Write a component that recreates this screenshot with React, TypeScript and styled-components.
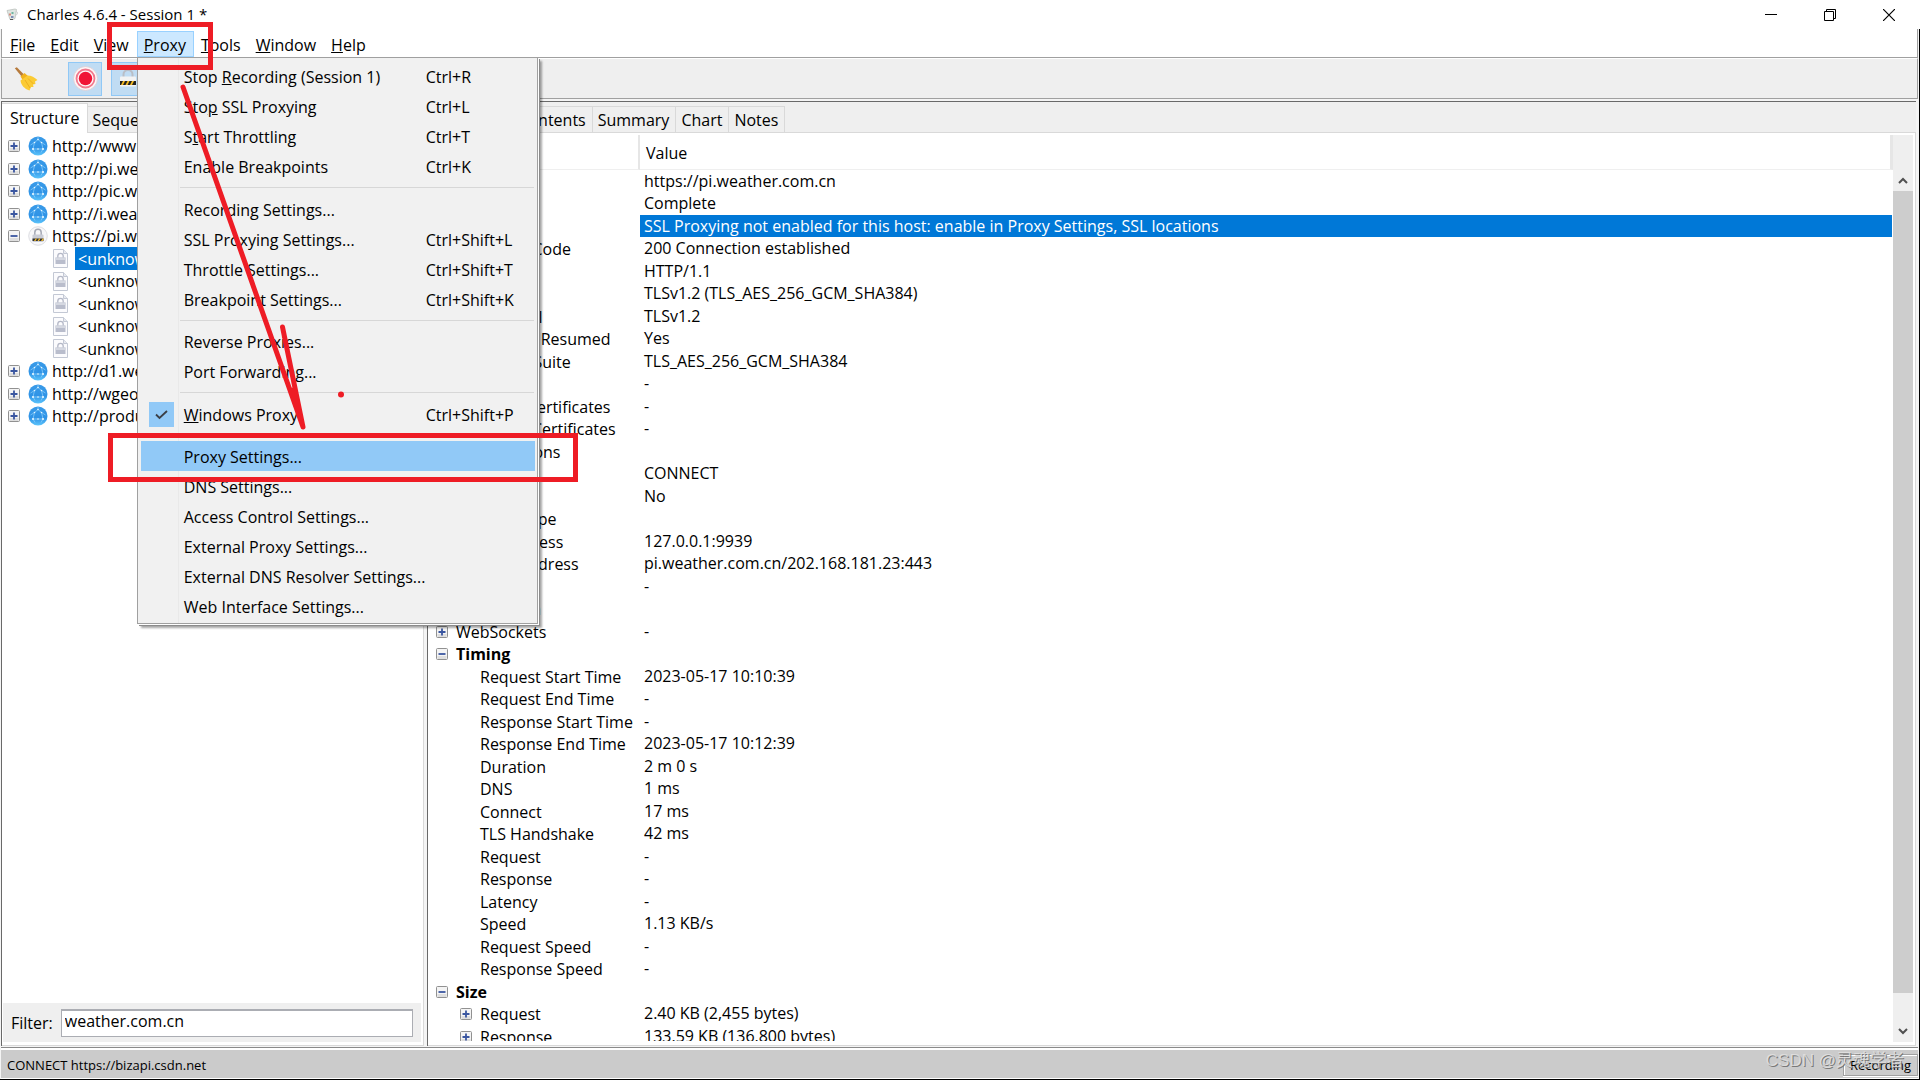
import React from "react";
import styled, { createGlobalStyle, css } from "styled-components";

const line = "#a0a0a0";
const dark = "#696969";
const soft = "#d9d9d9";
const face = "#efefef";
const red = "#ee1c25";

const Global = createGlobalStyle`
  *, *::before, *::after { box-sizing: border-box; }
  body { margin: 0; background: #fff; color: #000; overflow: hidden; }
  body, button, input, table {
    font-family: "Open Sans", "Noto Sans", "Noto Sans CJK SC", sans-serif;
    font-size: 16px;
    line-height: 20px;
  }
  button { margin: 0; padding: 0; border: 0; background: none; color: inherit; text-align: left; white-space: nowrap; }
  svg { display: block; flex: none; }
`;

const Window = styled.div`
  position: relative;
  display: flex;
  flex-direction: column;
  height: 100vh;
`;

const TitleBar = styled.header`
  display: flex;
  align-items: center;
  height: 29px;
  flex: none;
  padding: 0 2px 0 5px;
  gap: 6px;
`;

const Title = styled.h1`
  flex: 1;
  margin: 0;
  padding-bottom: 2px;
  font-size: 15px;
  font-weight: 400;
`;

const WindowButtons = styled.div`
  display: flex;
`;

const WindowButton = styled.button`
  display: flex;
  justify-content: center;
  align-items: center;
  width: 59px;
  height: 28px;
`;

const Frame = styled.div`
  display: flex;
  flex-direction: column;
  flex: 1;
  min-height: 0;
  border: solid #000;
  border-width: 0 1px 1px 0;
  padding: 0 1px 0 1px;
  background: #f4f4f4;
`;

const MenuBar = styled.nav`
  display: flex;
  align-items: flex-end;
  height: 29px;
  flex: none;
  padding-left: 1px;
  background: #fff;
  border: solid ${line};
  border-width: 0 1px 1px 1px;
`;

const MenuHolder = styled.div`
  position: relative;
`;

const MenuTitle = styled.button<{ $open?: boolean }>`
  height: 26px;
  padding: 1px 7px 0 6px;
  border: 1px solid ${(p) => (p.$open ? "#99d1ff" : "transparent")};
  background: ${(p) => (p.$open ? "#cce8ff" : "transparent")};
`;

const Popup = styled.div`
  position: absolute;
  top: 26px;
  left: 0;
  z-index: 2;
  width: 401px;
  padding: 3px 2px 2px 3px;
  background: linear-gradient(90deg, transparent 40px, #e9e9e9 40px, #e9e9e9 41px, transparent 41px) #f1f1f1;
  border: 1px solid ${line};
  box-shadow: 1px 1px 0 #fff, 2px 2px 0 #8c8c8c, 4px 4px 2px rgba(0, 0, 0, 0.35);
`;

const MenuItem = styled.button<{ $hot?: boolean }>`
  display: grid;
  grid-template-columns: 43px 242px 1fr;
  align-items: center;
  width: 100%;
  height: 30px;
  padding-top: 1px;
  background: ${(p) => (p.$hot ? "#91c9f7" : "transparent")};
`;

const Check = styled.span`
  display: flex;
  align-items: center;
  justify-content: center;
  width: 25px;
  height: 25px;
  margin-left: 8px;
  background: #91c9f7;
`;

const Separator = styled.hr`
  height: 12px;
  margin: 0 1px 0 39px;
  border: 0;
  background: linear-gradient(#d7d7d7, #d7d7d7) 0 6px / 100% 1px no-repeat;
  &:nth-of-type(odd) { height: 13px; }
`;

const ToolBar = styled.div`
  display: flex;
  align-items: center;
  height: 41px;
  flex: none;
  gap: 9px;
  padding-left: 7px;
  background: ${face};
  border: solid ${line};
  border-width: 0 1px 1px 1px;
  border-top: 1px solid #fff;
`;

const ToolButton = styled.button<{ $on?: boolean }>`
  display: flex;
  align-items: center;
  justify-content: center;
  width: 34px;
  height: 34px;
  border: 1px solid ${(p) => (p.$on ? "#90c8f6" : "transparent")};
  background: ${(p) => (p.$on ? "#c0dcf3" : "transparent")};
  &:first-child { margin-right: 16px; }
`;

const Workspace = styled.main`
  display: flex;
  flex: 1;
  min-height: 0;
  gap: 3px;
  margin: 2px 2px 2px 0;
`;

const Pane = styled.section<{ $fill?: boolean }>`
  display: flex;
  flex-direction: column;
  min-width: 0;
  border: solid ${dark};
  border-width: 1px 0 0 1px;
  ${(p) => (p.$fill ? css`flex: 1;` : css`flex: 0 0 423px;`)}
`;

const Tabs = styled.div`
  display: flex;
  align-items: flex-end;
  height: 31px;
  flex: none;
  background: ${face};
  border-bottom: 1px solid ${soft};
`;

const Tab = styled.button<{ $on?: boolean }>`
  height: 26px;
  padding: 1px 6px 0 5px;
  border: solid ${soft};
  border-width: 1px 1px 0 0;
  ${(p) =>
    p.$on &&
    css`
      height: 30px;
      margin-bottom: -1px;
      padding: 0 7px 2px 8px;
      background: #fff;
    `}
`;

const Body = styled.div`
  display: flex;
  flex-direction: column;
  flex: 1;
  min-height: 0;
  padding: 2px 2px 3px 1px;
  background: #fff;
  border: solid ${soft};
  border-width: 0 1px 1px 0;
`;

const Tree = styled.ul`
  flex: 1;
  margin: 0;
  padding: 0;
  list-style: none;
`;

const Node = styled.li<{ $child?: boolean }>`
  display: flex;
  align-items: center;
  height: 22px;
  padding-left: ${(p) => (p.$child ? 50 : 5)}px;
  gap: ${(p) => (p.$child ? 7 : 8)}px;
  &:nth-child(even) { height: 23px; }
`;

const NodeText = styled.span<{ $on?: boolean; $child?: boolean }>`
  display: flex;
  align-items: center;
  height: 100%;
  margin-left: ${(p) => (p.$child ? 0 : -7)}px;
  padding: 0 3px;
  ${(p) => p.$on && css`background: #0078d7; color: #fff;`}
`;

const FilterBar = styled.div`
  display: flex;
  align-items: center;
  gap: 8px;
  height: 39px;
  padding: 0 8px;
  background: ${face};
`;

const FilterInput = styled.input`
  flex: 1;
  min-width: 0;
  height: 28px;
  padding: 0 3px 4px;
  background: #fff;
  border: 1px solid #abadb3;
  border-top-width: 2px;
  outline: 0;
`;

const Expand = styled.button`
  display: block;
  width: 12px;
  height: 12px;
  flex: none;
`;

const Split = styled.div`
  display: flex;
  flex: 1;
  min-height: 0;
`;

const Scroller = styled.div`
  flex: 1;
  min-width: 0;
  margin-bottom: 1px;
  overflow: hidden;
`;

const Grid = styled.table`
  width: 100%;
  table-layout: fixed;
  border-collapse: separate;
  border-spacing: 0;
`;

const NameCol = styled.col`
  width: 211px;
`;

const Head = styled.th<{ $last?: boolean }>`
  height: 35px;
  padding: 1px 6px 0;
  font-weight: 400;
  text-align: left;
  border-bottom: 1px solid ${face};
  border-right: ${(p) => (p.$last ? 3 : 2)}px solid #e6e6e6;
`;

const Row = styled.tr`
  height: 22px;
  &:nth-child(even) { height: 23px; }
`;

const NameCell = styled.th<{ $depth: number; $bold?: boolean }>`
  padding: 1px 0 0 ${(p) => (p.$depth ? 31 : 7)}px;
  font-weight: ${(p) => (p.$bold ? 700 : 400)};
  text-align: left;
`;

const NameInner = styled.div<{ $leaf?: boolean }>`
  display: flex;
  align-items: center;
  gap: 8px;
  padding-left: ${(p) => (p.$leaf ? 20 : 0)}px;
  white-space: nowrap;
`;

const ValueCell = styled.td<{ $on?: boolean }>`
  padding: 0 4px 1px;
  white-space: nowrap;
  border-right: 1px solid #fff;
  background: ${(p) => (p.$on ? "#0078d7" : "transparent")};
  background-clip: padding-box;
  color: ${(p) => (p.$on ? "#fff" : "#000")};
`;

const ScrollBar = styled.div`
  display: flex;
  flex-direction: column;
  width: 20px;
  padding-top: 35px;
  background: ${face};
`;

const ScrollButton = styled.button`
  display: flex;
  align-items: center;
  justify-content: center;
  height: 21px;
`;

const Track = styled.div`
  flex: 1;
  padding-bottom: 28px;
`;

const Thumb = styled.div`
  height: 100%;
  background: #cdcdcd;
`;

const StatusBar = styled.footer`
  position: relative;
  display: flex;
  align-items: center;
  justify-content: space-between;
  height: 31px;
  flex: none;
  padding: 1px 0 0 6px;
  font-size: 13px;
  background: #cbcbcb;
  border: solid #fff;
  border-width: 2px 0 1px;
  box-shadow: 0 -1px 0 #8a8a8a;
`;

const Recording = styled.span`
  padding: 0 6px;
  border: 1px solid ${line};
  box-shadow: 0 1px 0 #fff, inset 1px 1px 0 #fff;
`;

const Watermark = styled.span`
  position: absolute;
  right: 14px;
  top: -1px;
  font-family: "Liberation Sans", "Noto Sans CJK SC", sans-serif;
  font-size: 17px;
  line-height: 24px;
  color: rgba(226, 226, 226, 0.85);
  text-shadow: 1px 1px 0 rgba(110, 110, 110, 0.9);
`;

const Markup = styled.svg`
  position: absolute;
  top: 0;
  left: 0;
  z-index: 3;
  pointer-events: none;
`;

function Toggle({ open }: { open?: boolean }) {
  return (
    <Expand aria-label={open ? "Collapse" : "Expand"}>
      <svg width="12" height="12" viewBox="0 0 12 12">
        <rect x=".5" y=".5" width="11" height="11" rx="1" fill="#f4f4f4" stroke="#919191" />
        <path d="M1.500 8h9v3h-9z" fill="#dedede" />
        <path d={open ? "M2.500 6h7" : "M2.500 6h7M6 2.500v7"} stroke="#3a56a0" strokeWidth="1.800" />
      </svg>
    </Expand>
  );
}

function Globe() {
  return (
    <svg width="20" height="20" viewBox="0 0 20 20">
      <defs>
        <linearGradient id="globe" x1="0" y1="0" x2="0" y2="1">
          <stop offset="0" stopColor="#3a9be8" />
          <stop offset=".6" stopColor="#2f93e6" />
          <stop offset="1" stopColor="#5cc4fb" />
        </linearGradient>
      </defs>
      <circle cx="10" cy="10" r="9.500" fill="url(#globe)" />
      <path d="M10 3.500 6.500 6.500 5 13h10L13.500 6.500zM5 13l2 3.500M15 13l-2 3.500M6.500 6.500 2.500 9M13.500 6.500l4 2.500M10 .8v2.700" fill="none" stroke="#8fd3fd" strokeWidth=".7" />
      <g fill="#e9f8ff">
        <circle cx="10" cy="3.500" r=".8" />
        <circle cx="6.500" cy="6.500" r=".8" />
        <circle cx="13.500" cy="6.500" r=".8" />
        <circle cx="5" cy="13" r="1.100" />
        <circle cx="15" cy="13" r="1.100" />
        <circle cx="10" cy="13" r=".8" />
      </g>
    </svg>
  );
}

function SecureHost() {
  return (
    <svg width="20" height="20" viewBox="0 0 20 20">
      <circle cx="10" cy="10" r="9.300" fill="#f7f7f9" stroke="#d5d7dc" strokeWidth=".8" />
      <path d="M6.800 9V6.500a3.200 3.200 0 0 1 6.400 0V9" fill="none" stroke="#a5a9b5" strokeWidth="1.500" />
      <rect x="4.500" y="8.500" width="11" height="7.500" rx="1" fill="#c9ccd6" />
      <path d="M4.500 12.500h11v2.500h-11z" fill="#333" />
      <path d="m6 15 1.600-2.500h1.500L7.500 15zM9.500 15l1.600-2.500h1.500L11 15zM13 15l1.600-2.500h.9V14l-.8 1z" fill="#f0b92c" />
    </svg>
  );
}

function LockedPage() {
  return (
    <svg width="15" height="19" viewBox="0 0 15 19">
      <path d="M.5.5h10l4 4v14H.5z" fill="#fbfbfd" stroke="#c3c8d4" />
      <path d="M10.500.5v4h4" fill="#e8eaf0" stroke="#c3c8d4" />
      <path d="M4.800 9V7a2.700 2.700 0 0 1 5.400 0v2" fill="none" stroke="#b3b7c6" strokeWidth="1.300" />
      <path d="M2.500 8.500h10v6.500h-10z" fill="#b9bdcc" />
      <path d="M2.500 8.500h10v2.500h-10z" fill="#d5d8e1" />
    </svg>
  );
}

function Pitcher() {
  return (
    <svg width="16" height="16" viewBox="0 0 16 16">
      <path d="M2 3.500 10 2l1.500.5-1.500 9-2 1H5z" fill="#dfe6e2" stroke="#b5bab6" strokeWidth=".7" />
      <path d="M11 4.500c2 0 2 3-.5 4" fill="none" stroke="#ccc" />
      <path d="M4 6.500h2v2H4z" fill="#d98a7c" />
      <path d="M6.500 5h2v2h-2z" fill="#6fb5a0" />
      <path d="M6 9h2.500v2H6z" fill="#7f8fb8" />
      <path d="M5 12.500h3" stroke="#555" />
    </svg>
  );
}

function Broom() {
  return (
    <svg width="24" height="24" viewBox="0 0 24 24">
      <path d="m.8 1.200 2-1L10 7.500 7.800 9.700z" fill="#b67a3c" />
      <path d="M6.500 9.500 10.500 6l3.500 3-5 4.500z" fill="#f2b21d" />
      <path d="M13.500 8.500c4 0 7 2 10 4.500l-2.500 1.500.5 2.500-2.500.5.500 2.500-2.500 0-1.500 3.500C10.500 22 7 18 6.500 13.500z" fill="#fbcb34" />
      <path d="m11 13 5 8M14 11.500l5.500 5.500" stroke="#e9a71a" fill="none" strokeWidth=".8" />
    </svg>
  );
}

function RecordIcon() {
  return (
    <svg width="25" height="25" viewBox="0 0 25 25">
      <circle cx="12.500" cy="12.500" r="12" fill="#fdf5f6" stroke="#d9cdd3" strokeWidth=".8" />
      <circle cx="12.500" cy="12.500" r="9" fill="none" stroke="#f2798d" strokeWidth="1.800" />
      <circle cx="12.500" cy="12.500" r="6.700" fill="#f01536" />
    </svg>
  );
}

function SslIcon() {
  return (
    <svg width="18" height="20" viewBox="0 0 18 20">
      <path d="M4.500 8V5.500a4.500 4.500 0 0 1 9 0V8" fill="none" stroke="#b9bec6" strokeWidth="2" />
      <rect x="1" y="7.500" width="16" height="10" rx="1" fill="#f3f3f3" />
      <path d="M1 12h16v4H1z" fill="#222" />
      <path d="m2 16 2-4h2l-2 4zM6.500 16l2-4h2l-2 4zM11 16l2-4h2l-2 4z" fill="#f5bb22" />
    </svg>
  );
}

/* Splits a caption at "&" and underlines the access key that follows it. */
function Caption({ text }: { text: string }) {
  const at = text.indexOf("&");
  if (at < 0) return <span>{text}</span>;
  return (
    <span>
      {text.slice(0, at)}
      <u>{text[at + 1]}</u>
      {text.slice(at + 2)}
    </span>
  );
}

type Entry = null | [string, string?, ("checked" | "hot")?];

const proxyMenu: Entry[] = [
  ["Stop &Recording (Session 1)", "Ctrl+R"],
  ["Sto&p SSL Proxying", "Ctrl+L"],
  ["S&tart Throttling", "Ctrl+T"],
  ["Enable Breakpoints", "Ctrl+K"],
  null,
  ["Recording Settings..."],
  ["SSL Proxying Settings...", "Ctrl+Shift+L"],
  ["Throttle Settings...", "Ctrl+Shift+T"],
  ["Breakpoint Settings...", "Ctrl+Shift+K"],
  null,
  ["Reverse Proxies..."],
  ["Port Forwarding..."],
  null,
  ["&Windows Proxy", "Ctrl+Shift+P", "checked"],
  null,
  ["Proxy Settings...", "", "hot"],
  ["DNS Settings..."],
  ["Access Control Settings..."],
  ["External Proxy Settings..."],
  ["External DNS Resolver Settings..."],
  ["Web Interface Settings..."],
];

const hosts: [string, "site" | "secure" | "page"][] = [
  ["http://www.weather.com.cn", "site"],
  ["http://pi.weather.com.cn", "site"],
  ["http://pic.weather.com.cn", "site"],
  ["http://i.weather.com.cn", "site"],
  ["https://pi.weather.com.cn", "secure"],
  ["<unknown>", "page"],
  ["<unknown>", "page"],
  ["<unknown>", "page"],
  ["<unknown>", "page"],
  ["<unknown>", "page"],
  ["http://d1.weather.com.cn", "site"],
  ["http://wgeo.weather.com.cn", "site"],
  ["http://product.weather.com.cn", "site"],
];

/* name, value, depth, toggle state ("+" closed, "-" open) */
const details: [string, string, number, string?][] = [
  ["URL", "https://pi.weather.com.cn", 0],
  ["Status", "Complete", 0],
  ["Notes", "SSL Proxying not enabled for this host: enable in Proxy Settings, SSL locations", 0],
  ["Response Code", "200 Connection established", 0],
  ["Protocol", "HTTP/1.1", 0],
  ["TLS", "TLSv1.2 (TLS_AES_256_GCM_SHA384)", 0, "-"],
  ["Protocol", "TLSv1.2", 1, "+"],
  ["Session Resumed", "Yes", 1, "+"],
  ["Cipher Suite", "TLS_AES_256_GCM_SHA384", 1, "+"],
  ["ALPN", "-", 1, "+"],
  ["Client Certificates", "-", 1],
  ["Server Certificates", "-", 1],
  ["Extensions", "", 1, "+"],
  ["Method", "CONNECT", 0],
  ["Kept Alive", "No", 0],
  ["Content-Type", "", 0],
  ["Client Address", "127.0.0.1:9939", 0],
  ["Remote Address", "pi.weather.com.cn/202.168.181.23:443", 0],
  ["Tags", "-", 0],
  ["Connection", "", 0, "+"],
  ["WebSockets", "-", 0, "+"],
  ["Timing", "", 0, "-"],
  ["Request Start Time", "2023-05-17 10:10:39", 1],
  ["Request End Time", "-", 1],
  ["Response Start Time", "-", 1],
  ["Response End Time", "2023-05-17 10:12:39", 1],
  ["Duration", "2 m 0 s", 1],
  ["DNS", "1 ms", 1],
  ["Connect", "17 ms", 1],
  ["TLS Handshake", "42 ms", 1],
  ["Request", "-", 1],
  ["Response", "-", 1],
  ["Latency", "-", 1],
  ["Speed", "1.13 KB/s", 1],
  ["Request Speed", "-", 1],
  ["Response Speed", "-", 1],
  ["Size", "", 0, "-"],
  ["Request", "2.40 KB (2,455 bytes)", 1, "+"],
  ["Response", "133.59 KB (136,800 bytes)", 1, "+"],
];

function ProxyPopup() {
  return (
    <Popup role="menu">
      {proxyMenu.map((entry, i) =>
        entry ? (
          <MenuItem key={i} role="menuitem" $hot={entry[2] === "hot"}>
            <span>
              {entry[2] === "checked" && (
                <Check>
                  <svg width="13" height="10" viewBox="0 0 13 10">
                    <path d="m1 4.500 3.500 3.500L12 1" fill="none" stroke="#3b3f46" strokeWidth="1.800" />
                  </svg>
                </Check>
              )}
            </span>
            <Caption text={entry[0]} />
            <span>{entry[1]}</span>
          </MenuItem>
        ) : (
          <Separator key={i} />
        )
      )}
    </Popup>
  );
}

function DetailTable() {
  return (
    <Grid>
      <colgroup>
        <NameCol />
        <col />
      </colgroup>
      <thead>
        <tr>
          <Head scope="col">Name</Head>
          <Head scope="col" $last>Value</Head>
        </tr>
      </thead>
      <tbody>
        {details.map(([name, value, depth, state], i) => (
          <Row key={i}>
            <NameCell scope="row" $depth={depth} $bold={name === "Timing" || name === "Size"}>
              <NameInner $leaf={!state}>
                {state && <Toggle open={state === "-"} />}
                {name}
              </NameInner>
            </NameCell>
            <ValueCell $on={name === "Notes"}>{value}</ValueCell>
          </Row>
        ))}
      </tbody>
    </Grid>
  );
}

export default function App() {
  return (
    <Window>
      <Global />
      <TitleBar>
        <Pitcher />
        <Title>Charles 4.6.4 - Session 1 *</Title>
        <WindowButtons>
          <WindowButton aria-label="Minimize">
            <svg width="12" height="12" viewBox="0 0 12 12"><path d="M0 5.500h12" stroke="#000" /></svg>
          </WindowButton>
          <WindowButton aria-label="Restore">
            <svg width="12" height="12" viewBox="0 0 12 12">
              <path d="M.5 2.500h9v9h-9zM2.500 2.500v-2h9v9h-2" fill="none" stroke="#000" />
            </svg>
          </WindowButton>
          <WindowButton aria-label="Close">
            <svg width="12" height="12" viewBox="0 0 12 12"><path d="m0 0 12 12M12 0 0 12" stroke="#000" strokeWidth="1.200" /></svg>
          </WindowButton>
        </WindowButtons>
      </TitleBar>
      <Frame>
        <MenuBar>
          {["&File", "&Edit", "&View", "&Proxy", "&Tools", "&Window", "&Help"].map((m) => (
            <MenuHolder key={m}>
              <MenuTitle $open={m === "&Proxy"}><Caption text={m} /></MenuTitle>
              {m === "&Proxy" && <ProxyPopup />}
            </MenuHolder>
          ))}
        </MenuBar>
        <ToolBar>
          <ToolButton aria-label="Clear session"><Broom /></ToolButton>
          <ToolButton aria-label="Stop recording" $on><RecordIcon /></ToolButton>
          <ToolButton aria-label="Stop SSL proxying" $on><SslIcon /></ToolButton>
        </ToolBar>
        <Workspace>
          <Pane>
            <Tabs>
              <Tab $on>Structure</Tab>
              <Tab>Sequence</Tab>
            </Tabs>
            <Body>
              <Tree>
                {hosts.map(([label, kind], i) => (
                  <Node key={i} $child={kind === "page"}>
                    {kind !== "page" && <Toggle open={kind === "secure"} />}
                    {kind === "site" ? <Globe /> : kind === "secure" ? <SecureHost /> : <LockedPage />}
                    <NodeText $child={kind === "page"} $on={i === 5}>{label}</NodeText>
                  </Node>
                ))}
              </Tree>
              <FilterBar>
                <label htmlFor="filter">Filter:</label>
                <FilterInput id="filter" defaultValue="weather.com.cn" />
              </FilterBar>
            </Body>
          </Pane>
          <Pane $fill>
            <Tabs>
              <Tab $on>Overview</Tab>
              <Tab>Contents</Tab>
              <Tab>Summary</Tab>
              <Tab>Chart</Tab>
              <Tab>Notes</Tab>
            </Tabs>
            <Body>
              <Split>
                <Scroller><DetailTable /></Scroller>
                <ScrollBar>
                  <ScrollButton aria-label="Scroll up">
                    <svg width="10" height="7" viewBox="0 0 10 7"><path d="m1 6 4-4 4 4" fill="none" stroke="#505050" strokeWidth="2" /></svg>
                  </ScrollButton>
                  <Track><Thumb /></Track>
                  <ScrollButton aria-label="Scroll down">
                    <svg width="10" height="7" viewBox="0 0 10 7"><path d="m1 1 4 4 4-4" fill="none" stroke="#505050" strokeWidth="2" /></svg>
                  </ScrollButton>
                </ScrollBar>
              </Split>
            </Body>
          </Pane>
        </Workspace>
        <StatusBar>
          <span>CONNECT https://bizapi.csdn.net</span>
          <Recording>Recording</Recording>
          <Watermark>CSDN @灵魂学者</Watermark>
        </StatusBar>
      </Frame>
      <Markup width="600" height="500" viewBox="0 0 600 500" fill="none" stroke={red} strokeWidth="5">
        <path d="M109.500 24.500h101v43h-101zM110.500 435.500h465v44h-465z" />
        <path d="M183 87 303 427M282.500 327 303 427M293 390l9 34" strokeLinecap="round" strokeLinejoin="round" />
        <circle cx="341" cy="394.500" r="3" fill={red} stroke="none" />
      </Markup>
    </Window>
  );
}
